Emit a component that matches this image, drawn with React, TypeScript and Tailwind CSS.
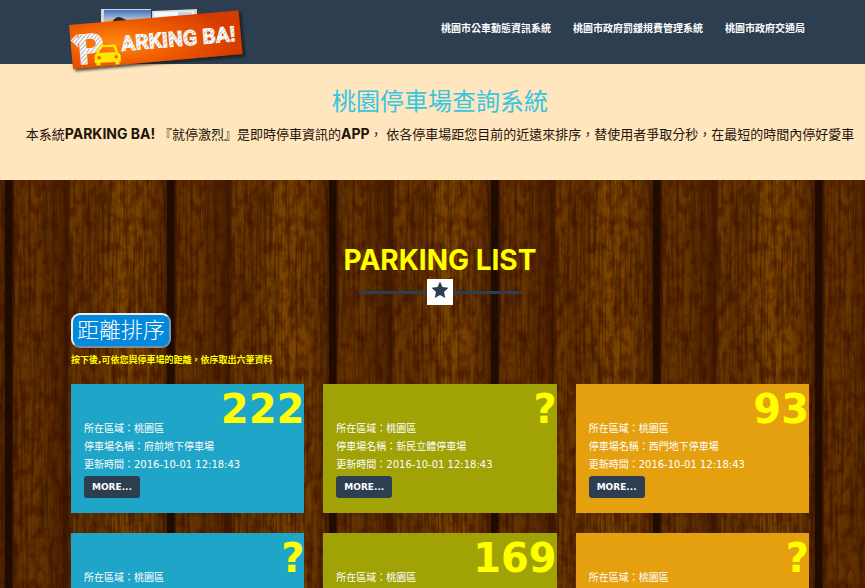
import React from "react";

const LATIN = "font-['Inter','Noto_Sans_CJK_TC',sans-serif]";
const BODY = "font-['DejaVu_Sans','Noto_Sans_CJK_TC',sans-serif]";

type Lot = { area: string; name?: string; updated?: string; free: string };

const lots: Lot[] = [
  { area: "桃園區", name: "府前地下停車場", updated: "2016-10-01 12:18:43", free: "222" },
  { area: "桃園區", name: "新民立體停車場", updated: "2016-10-01 12:18:43", free: "?" },
  { area: "桃園區", name: "西門地下停車場", updated: "2016-10-01 12:18:43", free: "93" },
  { area: "桃園區", free: "?" },
  { area: "桃園區", free: "169" },
  { area: "桃園區", free: "?" },
];

const columnColors = ["bg-[#1fa5c8]", "bg-[#a0a206]", "bg-[#e5a00f]"];

const links = ["桃園市公車動態資訊系統", "桃園市政府罰鍰規費管理系統", "桃園市政府交通局"];

function Logo() {
  return (
    <svg width="182" height="74" viewBox="66 2 182 74" aria-label="Parking BA!" role="img">
      <defs>
        <radialGradient id="plate" cx="0.28" cy="0.55" r="0.7">
          <stop offset="0" stopColor="#ff8a0a" />
          <stop offset="0.5" stopColor="#ee5a05" />
          <stop offset="1" stopColor="#d63a02" />
        </radialGradient>
        <linearGradient id="sky" x1="0" y1="0" x2="0" y2="1">
          <stop offset="0" stopColor="#3b6fc4" />
          <stop offset="0.6" stopColor="#a9b7cf" />
          <stop offset="1" stopColor="#f2b04a" />
        </linearGradient>
        <pattern id="hatch" width="3" height="3" patternUnits="userSpaceOnUse" patternTransform="rotate(45)">
          <rect width="3" height="3" fill="#fff" />
          <rect width="1" height="3" fill="#aaa" />
        </pattern>
        <filter id="shade" x="-10%" y="-10%" width="120%" height="130%">
          <feDropShadow dx="2" dy="2" stdDeviation="1.4" floodColor="#111" floodOpacity="0.8" />
        </filter>
      </defs>
      <path d="M101 9h50v14h-50z" fill="#d8d8d0" />
      <path d="M104 10h47v14h-47z" fill="url(#sky)" />
      <path d="M112 22q5-7 10-4t10 2v6h-20z" fill="#2c2418" />
      <path d="M152 11l45-2v13h-45z" fill="#d8d8d0" />
      <path d="M154 12l40-1v10h-40z" fill="#f3f7fb" />
      <path d="M178 12h14v5h-14z" fill="#bcd8ee" />
      <path d="M69 25L238.500 10.500L242.500 54L73 69z" fill="url(#plate)" filter="url(#shade)" />
      <g transform="rotate(-5 156 40)" fontWeight="700" fontFamily="Roboto, Liberation Sans, sans-serif" fill="url(#hatch)">
        <text x="77" y="58" fontSize="42" stroke="#fff" strokeWidth="0.500">P</text>
        <path d="M71 33l7-6v4h6v6h-6v4z" />
        <text x="121" y="48" fontSize="21" stroke="#fff" strokeWidth="0.800">ARKING BA!</text>
      </g>
      <g transform="rotate(-3 107 55)">
        <path fillRule="evenodd" fill="#ffe600" d="M99 45h17l2.500 8q2 1 2 3v6.500h-1.500v2.500h-4v-2.500h-15v2.500h-4v-2.500h-1.500v-6.500q0-2 2-3zM101 47l-1.500 5.500h16l-1.500-5.500zM99 55.500a1.800 1.800 0 1 0 .1 0zM116 55.500a1.800 1.800 0 1 0 .1 0z" />
      </g>
    </svg>
  );
}

function Wood() {
  return (
    <svg className="absolute inset-0 -z-10 h-full w-full" aria-hidden="true">
      <defs>
        <filter id="grain" x="0" y="0" width="100%" height="100%" colorInterpolationFilters="sRGB">
          <feTurbulence type="fractalNoise" baseFrequency="0.38 0.014" numOctaves="3" seed="4" />
          <feColorMatrix values="0 0 0 0 0.18  0 0 0 0 0.05  0 0 0 0 0  3 0 0 0 -1.2" />
        </filter>
        <filter id="speckle" x="0" y="0" width="100%" height="100%" colorInterpolationFilters="sRGB">
          <feTurbulence type="fractalNoise" baseFrequency="0.13 0.08" numOctaves="5" seed="11" />
          <feColorMatrix values="0 0 0 0 0.24  0 0 0 0 0.04  0 0 0 0 0  0 3 0 0 -1.2" />
        </filter>
        <linearGradient id="board" x1="0" x2="1" y1="0" y2="0">
          <stop offset="0" stopColor="#200c00" />
          <stop offset="0.04" stopColor="#200c00" />
          <stop offset="0.06" stopColor="#623200" />
          <stop offset="0.2" stopColor="#663600" />
          <stop offset="0.34" stopColor="#542800" />
          <stop offset="0.38" stopColor="#3e1a00" />
          <stop offset="0.41" stopColor="#6c3a00" />
          <stop offset="0.55" stopColor="#643400" />
          <stop offset="0.72" stopColor="#7c4600" />
          <stop offset="0.85" stopColor="#764000" />
          <stop offset="0.97" stopColor="#5c2e00" />
          <stop offset="1" stopColor="#4a2200" />
        </linearGradient>
        <pattern id="planks" x="5" width="162" height="640" patternUnits="userSpaceOnUse">
          <rect width="162" height="640" fill="url(#board)" />
          <rect width="162" height="640" filter="url(#speckle)" opacity="0.5" />
          <rect width="162" height="640" filter="url(#grain)" opacity="0.5" />
          <rect width="7" height="640" fill="#1a0900" opacity="0.5" />
        </pattern>
      </defs>
      <rect width="100%" height="100%" fill="url(#planks)" />
    </svg>
  );
}

function Card({ lot, color }: { lot: Lot; color: string }) {
  return (
    <article className={`${color} min-h-[129px] text-white`}>
      <p className="h-9 pt-1 text-right text-[40px] leading-[42px] font-bold text-[#ffff00]">{lot.free}</p>
      <div className="pl-[13px] text-[10px] leading-[18px]">
        <p>所在區域：{lot.area}</p>
        {lot.name && <p>停車場名稱：{lot.name}</p>}
        {lot.updated && (
          <>
            <p>更新時間：{lot.updated}</p>
            <button type="button" className="mt-[2px] block h-[22px] rounded-[3px] bg-[#2c3e50] px-2 text-[9px] leading-[22px] font-bold">
              MORE...
            </button>
          </>
        )}
      </div>
    </article>
  );
}

export default function App() {
  return (
    <div className={`${BODY} flex min-h-screen flex-col`}>
      <header className="h-16 shrink-0 bg-[#2c3e50] pl-[15px]">
        <div className="mx-auto flex max-w-[738px] items-start justify-between pr-1">
          <div className="relative z-10 -ml-[5px] h-16 pt-[2px]">
            <Logo />
          </div>
          <nav className="flex gap-[22px] pt-[21px]">
            {links.map((label) => (
              <a key={label} href="#" className="text-[10px] leading-4 font-bold text-white">
                {label}
              </a>
            ))}
          </nav>
        </div>
      </header>

      <section className={`${LATIN} bg-[#ffe6be] pt-[22px] pb-9 pl-[15px] text-center`}>
        <h1 className="text-2xl text-[#37c5e0]">桃園停車場查詢系統</h1>
        <p className="mt-[6px] text-[13px] leading-5 whitespace-nowrap text-[#1e1408]">
          本系統<strong className="text-sm leading-5">PARKING BA!</strong> 『就停激烈』是即時停車資訊的<strong className="text-sm leading-5">APP</strong>，
          依各停車場距您目前的近遠來排序，替使用者爭取分秒，在最短的時間內停好愛車
        </p>
      </section>

      <main className="relative isolate flex-1 pl-[15px]">
        <Wood />
        <div className="mx-auto max-w-[738px] pt-16">
          <h2 className={`${LATIN} text-center text-[28px] leading-8 font-bold text-[#ffff00]`}>PARKING LIST</h2>
          <div className="mx-auto mt-[3px] flex w-[162px] items-center">
            <span className="h-[3px] flex-1 bg-[#2c3e50]" />
            <span className="flex h-[26px] w-[26px] items-start justify-center bg-white pt-[2px]">
              <svg width="18" height="18" viewBox="0 0 18 18" aria-hidden="true">
                <path d="M9 0.500l2.500 5.600 6 .7-4.500 4.100 1.300 6.100L9 13.900 3.700 17 5 10.900.5 6.800l6-.7z" fill="#2c3e50" />
              </svg>
            </span>
            <span className="h-[3px] flex-1 bg-[#2c3e50]" />
          </div>
          <button
            type="button"
            className="mt-2 block h-[35px] rounded-[9px] border-2 border-t-[#e8eef4] border-r-[#7c98b0] border-b-[#7c8c98] border-l-[#e8eef4] bg-[#0288dc] px-1 text-[22px] leading-8 font-light text-white"
          >
            距離排序
          </button>
          <p className="mt-1 text-[9px] leading-4 font-bold text-[#ffff00]">按下後,可依您與停車場的距離，依序取出六筆資料</p>
          <div className="mt-4 grid grid-cols-3 gap-x-[19px] gap-y-5">
            {lots.map((lot, i) => (
              <Card key={i} lot={lot} color={columnColors[i % 3]} />
            ))}
          </div>
        </div>
      </main>
    </div>
  );
}
